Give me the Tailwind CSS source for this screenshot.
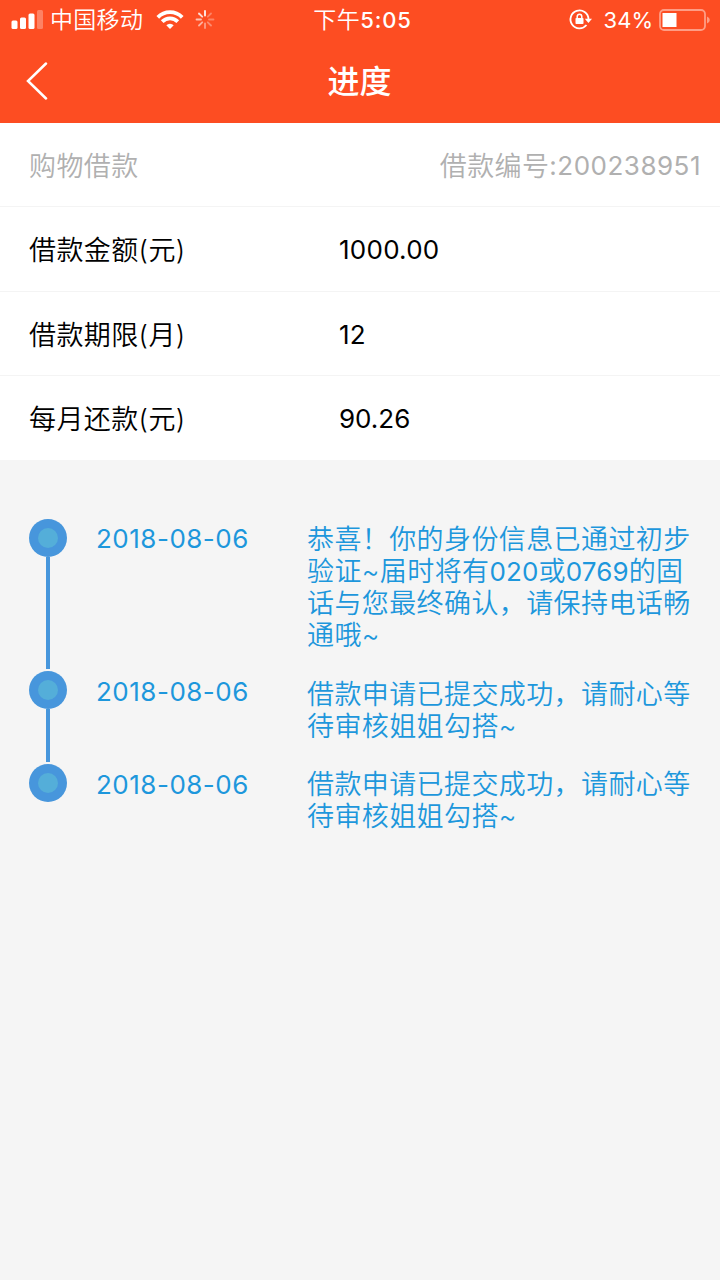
<!DOCTYPE html>
<html lang="zh-CN">
<head>
    <meta charset="UTF-8">
    <meta name="viewport" content="width=device-width, initial-scale=1.0">
    <title>进度</title>
    <script src="https://cdn.jsdelivr.net/npm/@tailwindcss/browser@4"></script>
</head>
<body class="bg-[#f5f5f5] text-black min-h-screen font-[Inter,'Noto_Sans_CJK_SC',sans-serif] text-[26px] overflow-x-hidden">

    <header class="bg-[#fd4d22] text-white h-[123px]">
        <!-- Status bar -->
        <div class="grid grid-cols-[1fr_auto_1fr] items-center h-10 pl-[13px] pr-[10px] text-[22px]">
            <div class="flex items-center -ml-0.5">
                <svg class="w-8 h-5 shrink-0" viewBox="0 0 32 20" fill="#fff">
                    <rect x="0.5" y="10.5" width="6" height="8.5" rx="1.5"/>
                    <rect x="9" y="7.5" width="6" height="11.5" rx="1.5"/>
                    <rect x="17.5" y="3.5" width="6" height="15.5" rx="1.5"/>
                    <rect x="26" y="0" width="6" height="19" rx="1.5" opacity=".3"/>
                </svg>
                <span class="ml-[7px] text-[23px] font-[350] tracking-[0.3px] leading-10 whitespace-nowrap">中国移动</span>
                <svg class="ml-[13px] w-7 h-5 shrink-0" viewBox="0 0 28 20" fill="none" stroke="#fff" stroke-width="3.8">
                    <path d="M1.8 7.3a17.2 17.2 0 0 1 24.4 0"/>
                    <path d="M6.2 11.7a11 11 0 0 1 15.6 0"/>
                    <path d="M14 19l-3.7-3.7a5.2 5.2 0 0 1 7.4 0z" fill="#fff" stroke="none"/>
                </svg>
                <svg class="ml-[11px] w-5 h-5 shrink-0" viewBox="0 0 20 20" stroke="#fff" stroke-width="1.8" stroke-linecap="round">
                    <path d="M10 1v4.5" opacity=".95"/>
                    <path d="M16 3.5l-3.2 3.2" opacity=".3"/>
                    <path d="M18.5 9.5h-4.5" opacity=".3"/>
                    <path d="M16 15.5l-3.2-3.2" opacity=".35"/>
                    <path d="M10 18v-4.5" opacity=".45"/>
                    <path d="M4 15.5l3.2-3.2" opacity=".55"/>
                    <path d="M1.5 9.5h4.5" opacity=".65"/>
                    <path d="M4 3.5l3.2 3.2" opacity=".8"/>
                </svg>
            </div>
            <div class="flex leading-10 whitespace-nowrap pl-0.5">
                <span class="text-[23px] font-[350] tracking-[0.5px]">下午</span><span class="font-medium tracking-[0.9px]">5:05</span>
            </div>
            <div class="flex items-center justify-end">
                <svg class="w-6 h-6 -mt-0.5" viewBox="0 0 24 24" fill="none" stroke="#fff" stroke-width="1.8">
                    <path d="M18.5 18a9 9 0 1 1 2-6"/>
                    <path d="M16.8 11.8h7.2l-3.6 4.2z" fill="#fff" stroke="none"/>
                    <rect x="7.5" y="11" width="8" height="6" rx="0.8" fill="#fff" stroke="none"/>
                    <path d="M9.2 11.5v-2a2.3 2.3 0 0 1 4.6 0v2" stroke-width="1.5"/>
                </svg>
                <span class="ml-3 leading-10">34%</span>
                <svg class="ml-1.5 w-[51px] h-[22px]" viewBox="0 0 51 22" fill="none">
                    <rect x="1" y="1" width="45" height="20" rx="4" stroke="#fff" stroke-width="1.8" opacity=".45"/>
                    <rect x="3.500" y="4" width="14" height="14" fill="#fff"/>
                    <path d="M48 7.5q2.8 1 2.8 3.5t-2.8 3.5z" fill="#fff" opacity=".45"/>
                </svg>
            </div>
        </div>
        <!-- Navbar -->
        <div class="grid grid-cols-[1fr_auto_1fr] items-center h-[83px] px-[26px]">
            <svg class="w-[22px] h-[38px] -mt-0.5" viewBox="0 0 22 38" fill="none" stroke="#fff" stroke-width="2.5" stroke-linecap="round">
                <path d="M20 1.5L2 19l18 17.5"/>
            </svg>
            <h1 class="text-[32px] leading-[83px] font-medium -ml-px">进度</h1>
        </div>
    </header>

    <!-- Loan details -->
    <section class="bg-white h-[337px] grid grid-rows-4 divide-y divide-[#f4f4f4] leading-[86px]">
        <div class="flex justify-between pl-[29px] pr-[19px] text-[#b0b0b0]">
            <span class="text-[27px] leading-[88px] font-[350] tracking-[0.4px]">购物借款</span>
            <span class="flex"><span class="text-[27px] leading-[88px] font-[350] tracking-[0.4px]">借款编号</span><span class="tracking-[0.5px]">:200238951</span></span>
        </div>
        <div class="flex pl-[29px]">
            <span class="w-[310px] text-[27px] leading-[88px] font-[350] tracking-[0.4px]">借款金额(元)</span>
            <span class="tracking-[0.25px]">1000.00</span>
        </div>
        <div class="flex pl-[29px]">
            <span class="w-[310px] text-[27px] leading-[88px] font-[350] tracking-[0.4px]">借款期限(月)</span>
            <span class="tracking-[0.25px]">12</span>
        </div>
        <div class="flex pl-[29px]">
            <span class="w-[310px] text-[27px] leading-[88px] font-[350] tracking-[0.4px]">每月还款(元)</span>
            <span>90.26</span>
        </div>
    </section>

    <!-- Timeline -->
    <ul class="pt-[59px] pl-[29px] text-[#1d97dc]">
        <li class="flex h-[152px]">
            <div class="flex flex-col items-center w-[38px] overflow-hidden">
                <div class="size-[38px] -mt-[0.5px] rounded-full bg-[#4796dc] flex items-center justify-center shrink-0"><i class="size-5 rounded-full bg-[#54aed9]"></i></div>
                <div class="w-1 grow mb-0.5 bg-[#4796dc]"></div>
            </div>
            <time class="ml-[29px] w-[211px] leading-[39px] tracking-[0.5px]">2018-08-06</time>
            <p class="pt-[5px] text-[27px] leading-8 font-[350] tracking-[0.4px] whitespace-nowrap">恭喜！你的身份信息已通过初步<br>验证~届时将有<span class="text-[26px] font-normal tracking-[0.1px]">020</span>或<span class="text-[26px] font-normal tracking-[0.1px]">0769</span>的固<br>话与您最终确认，请保持电话畅<br>通哦~</p>
        </li>
        <li class="flex h-[93px]">
            <div class="flex flex-col items-center w-[38px]">
                <div class="size-[38px] rounded-full bg-[#4796dc] flex items-center justify-center shrink-0"><i class="size-5 rounded-full bg-[#54aed9]"></i></div>
                <div class="w-1 grow mb-0.5 bg-[#4796dc]"></div>
            </div>
            <time class="ml-[29px] w-[211px] leading-[41px] tracking-[0.5px]">2018-08-06</time>
            <p class="pt-2 text-[27px] leading-8 font-[350] tracking-[0.4px] whitespace-nowrap">借款申请已提交成功，请耐心等<br>待审核姐姐勾搭~</p>
        </li>
        <li class="flex">
            <div class="size-[38px] rounded-full bg-[#4796dc] flex items-center justify-center shrink-0"><i class="size-5 rounded-full bg-[#54aed9]"></i></div>
            <time class="ml-[29px] w-[211px] leading-[41px] tracking-[0.5px]">2018-08-06</time>
            <p class="pt-[5px] text-[27px] leading-8 font-[350] tracking-[0.4px] whitespace-nowrap">借款申请已提交成功，请耐心等<br>待审核姐姐勾搭~</p>
        </li>
    </ul>

</body>
</html>
